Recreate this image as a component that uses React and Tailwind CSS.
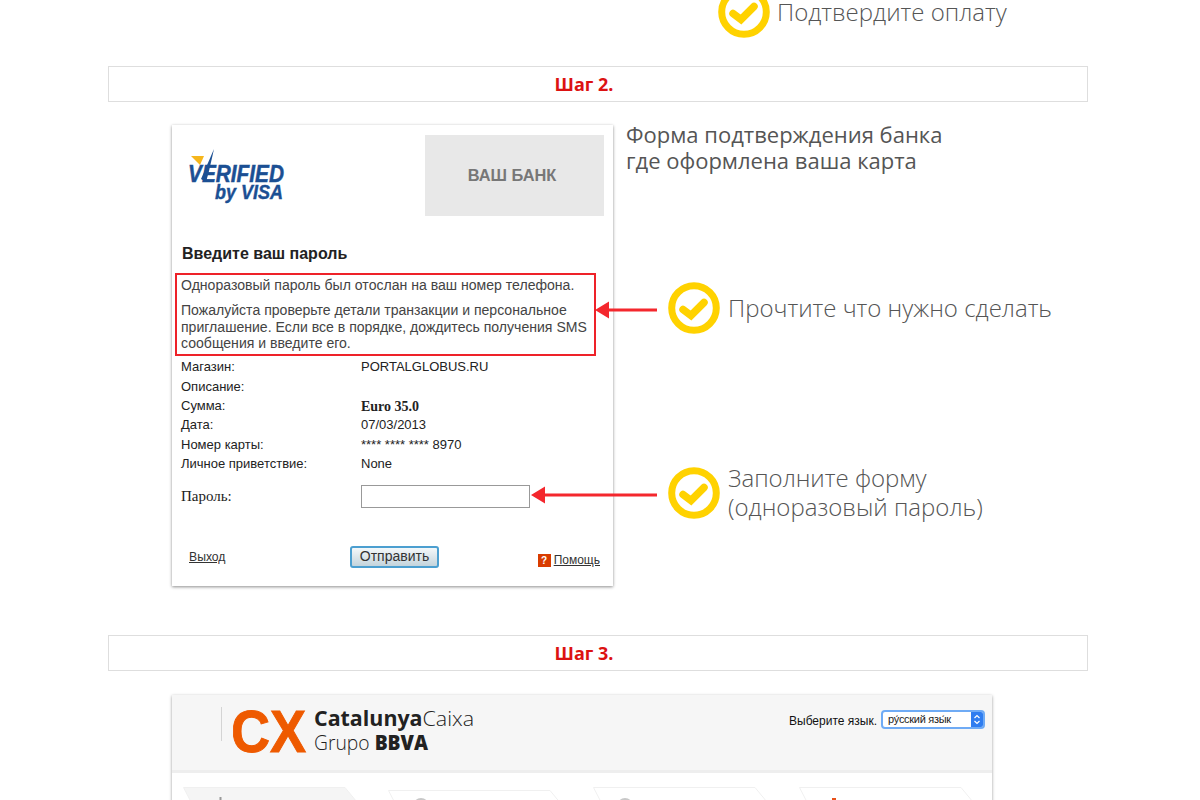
import React from "react";

const CheckBadge = () => (
  <svg width="52" height="52" viewBox="0 0 52 52" className="shrink-0">
    <circle cx="26" cy="26" r="22.3" fill="none" stroke="#ffd200" strokeWidth="7" />
    <path d="M15 27.5 L23 33.5 L36 20.5" fill="none" stroke="#ffd200" strokeWidth="7.5" strokeLinejoin="miter" strokeLinecap="round" />
  </svg>
);

// red pointer, the tip lies over the card
const Arrow = ({ width, className }) => (
  <svg width={width} height="18" viewBox={`0 0 ${width} 18`} className={className}>
    <path d={`M0 9 L14 0.5 L14 7.5 L${width} 7.5 L${width} 10.5 L14 10.5 L14 17.5 Z`} fill="#f4272d" />
  </svg>
);

const StepTitle = ({ children }) => (
  <div className="h-9 border border-[#dedede] flex items-center justify-center pr-[28px] font-['Open_Sans',sans-serif] font-bold text-[18px] text-[#dc1212]">
    {children}
  </div>
);

const VisaLogo = () => (
  <svg width="98" height="56" viewBox="0 0 98 56" className="shrink-0">
    <path d="M3 7 L16 7 L12 16 Z" fill="#f6b61c" />
    <path d="M13 30 L26 0 L21 22 L18 33 Z" fill="#1b4f93" />
    <text x="0" y="33" textLength="96" lengthAdjust="spacingAndGlyphs" fontFamily="Liberation Sans" fontWeight="700" fontStyle="italic" fontSize="24" fill="#1b4f93" stroke="#1b4f93" strokeWidth="0.5">VERIFIED</text>
    <text x="27" y="50" textLength="68" lengthAdjust="spacingAndGlyphs" fontFamily="Liberation Sans" fontWeight="700" fontStyle="italic" fontSize="19.5" fill="#1b4f93" stroke="#1b4f93" strokeWidth="0.4">by VISA</text>
  </svg>
);

const CxLogo = () => (
  <svg width="245" height="56" viewBox="0 0 245 56" className="shrink-0">
    <text x="-2" y="49" textLength="75" lengthAdjust="spacingAndGlyphs" fontFamily="Liberation Sans" fontWeight="700" fontSize="60" fill="#ee5a00" stroke="#ee5a00" strokeWidth="1">CX</text>
    <text x="81" y="23" fontFamily="Open Sans" fontSize="21" fill="#222" textLength="160" lengthAdjust="spacingAndGlyphs">
      <tspan fontWeight="700">Catalunya</tspan>
      <tspan fontWeight="300">Caixa</tspan>
    </text>
    <text x="81" y="47" fontFamily="Open Sans" fontSize="21" fill="#222" textLength="114" lengthAdjust="spacingAndGlyphs">
      <tspan fontWeight="300">Grupo </tspan>
      <tspan fontWeight="800">BBVA</tspan>
    </text>
  </svg>
);

const details = [
  { label: "Магазин:", value: "PORTALGLOBUS.RU", h: "h-[20px]" },
  { label: "Описание:", value: "", h: "h-[20px]" },
  { label: "Сумма:", value: "Euro 35.0", h: "h-[18px]", bold: true },
  { label: "Дата:", value: "07/03/2013", h: "h-[19px]" },
  { label: "Номер карты:", value: "**** **** **** 8970", h: "h-[21px]" },
  { label: "Личное приветствие:", value: "None", h: "h-[18px]" },
];

const tabs = [
  { fill: "#f5f5f5", w: "w-[205px]", top: "", mark: <rect x="36.5" y="10" width="2" height="6" fill="#999" /> },
  { fill: "#fff", w: "w-[205px]", top: "mt-[3px]", mark: <circle cx="33" cy="16" r="8" fill="#c8c8c8" /> },
  { fill: "#fff", w: "w-[206px]", top: "", mark: <circle cx="32" cy="19" r="8" fill="#c8c8c8" /> },
  { fill: "#fff", w: "w-[175px]", top: "", mark: <rect x="33" y="11" width="4" height="5" fill="#e8501a" /> },
];

const App = () => {
  return (
    <div className="h-[800px] w-[1200px] overflow-hidden bg-white font-['Liberation_Sans',sans-serif]">
      {/* top line left over from step 1 */}
      <div className="-mt-[14px] ml-[718px] flex items-center gap-[7px] h-[52px]">
        <CheckBadge />
        <span className="font-['Open_Sans',sans-serif] font-light text-[24px] text-[#555] -mt-[1px]">Подтвердите оплату</span>
      </div>

      <div className="mt-[28px] mx-[108px] w-[980px]">
        <StepTitle>Шаг 2.</StepTitle>

        <div className="mt-[23px] ml-[64px] flex h-[461px]">
          {/* bank form */}
          <div className="w-[441px] h-[461px] shrink-0 bg-white shadow-[0_1px_3px_rgba(0,0,0,0.45)]">
            <div className="flex justify-between pt-[10px] pr-[9px] pl-[16px]">
              <div className="pt-[14px]">
                <VisaLogo />
              </div>
              <div className="w-[179px] h-[81px] bg-[#e8e8e8] flex items-center justify-center pr-[5px] font-bold text-[16.4px] text-[#777]">
                ВАШ БАНК
              </div>
            </div>

            <h2 className="mt-[29px] ml-[10px] font-bold text-[16px] leading-[18px] text-[#222]">Введите ваш пароль</h2>

            <div className="mt-[10px] ml-[3px] w-[421px] h-[83px] border-2 border-[#ee2229] pl-[4px] pt-[2px] text-[14.07px] text-[#444]">
              <p className="leading-[16px]">Одноразовый пароль был отослан на ваш номер телефона.</p>
              <p className="mt-[9px] leading-[16.5px]">
                Пожалуйста проверьте детали транзакции и персональное приглашение. Если все в порядке, дождитесь получения SMS сообщения и введите его.
              </p>
            </div>

            <div className="ml-[9px] mt-[1px] text-[13px] text-[#222]">
              {details.map((row) => (
                <div key={row.label} className={`flex items-center ${row.h}`}>
                  <span className="w-[180px]">{row.label}</span>
                  <span className={row.bold ? "font-['Liberation_Serif',serif] font-bold text-[14px]" : ""}>{row.value}</span>
                </div>
              ))}
              <div className="flex items-center mt-[12px]">
                <span className="w-[180px] font-['Liberation_Serif',serif] text-[15px]">Пароль:</span>
                <div className="w-[169px] h-[23px] border border-[#999] bg-white" />
              </div>
            </div>

            <div className="mt-[38px] flex items-start pl-[17px] pr-[13px] text-[12.2px] text-[#333]">
              <a className="underline mt-[2px] w-[161px]">Выход</a>
              <button className="w-[89px] h-[22px] pb-[2px] rounded-[3px] border-2 border-[#4c9fd0] bg-gradient-to-b from-[#f4f8fa] to-[#c4d4dc] text-[14px] leading-[16px] text-[#333]">
                Отправить
              </button>
              <div className="ml-auto flex items-center gap-[3px] mt-[5px]">
                <span className="w-[13px] h-[13px] bg-[#d93c00] text-white font-bold text-[10px] leading-[13px] text-center">?</span>
                <a className="underline text-[12px]">Помощь</a>
              </div>
            </div>
          </div>

          {/* notes on the right */}
          <div className="relative ml-[13px] flex-1 font-['Open_Sans',sans-serif]">
            <p className="text-[22px] leading-[26px] text-[#555] -mt-[4px]">
              Форма подтверждения банка
              <br />
              где оформлена ваша карта
            </p>
            <div className="mt-[109px] ml-[42px] flex items-center gap-[8px] h-[52px] font-light text-[24px] text-[#555]">
              <CheckBadge />
              <span>Прочтите что нужно сделать</span>
            </div>
            <div className="mt-[133px] ml-[42px] flex items-center gap-[8px] h-[52px] font-light text-[24px] leading-[29px] text-[#555]">
              <CheckBadge />
              <span className="-mt-[2px]">
                Заполните форму
                <br />
                (одноразовый пароль)
              </span>
            </div>
            <Arrow width={62} className="absolute left-[-31px] top-[176px]" />
            <Arrow width={126} className="absolute left-[-95px] top-[361px]" />
          </div>
        </div>

        <div className="mt-[49px]">
          <StepTitle>Шаг 3.</StepTitle>
        </div>

        {/* bank page, cut by the window */}
        <div className="mt-[24px] ml-[64px] w-[820px] h-[200px] bg-white shadow-[0_1px_3px_rgba(0,0,0,0.4)]">
          <div className="h-[78px] bg-[#f6f6f6] border-b-[3px] border-[#eeeeee] flex pl-[49px] pr-[7px]">
            <div className="mt-[12px] w-px h-[34px] bg-[#d4d4d4]" />
            <div className="ml-[11px] mt-[8px]">
              <CxLogo />
            </div>
            <div className="ml-auto mt-[15px] flex items-start gap-[4px]">
              <span className="text-[12px] leading-[14px] mt-[4px] text-[#111]">Выберите язык.</span>
              <div className="w-[104px] h-[19px] flex rounded-[4px] overflow-hidden border-2 border-[#6fabf5] bg-white text-[11px] tracking-[-0.3px] leading-[14px] text-[#222]">
                <span className="flex-1 pl-[5px]">ру́сский язы́к</span>
                <span className="w-[12px] bg-[#2f7df0] flex items-center justify-center">
                  <svg width="8" height="13" viewBox="0 0 8 13">
                    <path d="M1.5 5 L4 2.5 L6.5 5 M1.5 8 L4 10.5 L6.5 8" fill="none" stroke="#fff" strokeWidth="1.2" />
                  </svg>
                </span>
              </div>
            </div>
          </div>
          <div className="mt-[14px] pl-[11px] flex">
            {tabs.map((tab, i) => (
              <div key={i} className={`${tab.w} ${tab.top} shrink-0`}>
                <svg width="175" height="16" viewBox="0 0 175 16">
                  <path d="M0.5 0.5 L162 0.5 L174 15 L8 15 Z" fill={tab.fill} stroke="#f0f0f0" />
                  {tab.mark}
                </svg>
              </div>
            ))}
          </div>
        </div>
      </div>
    </div>
  );
};

export default App;
